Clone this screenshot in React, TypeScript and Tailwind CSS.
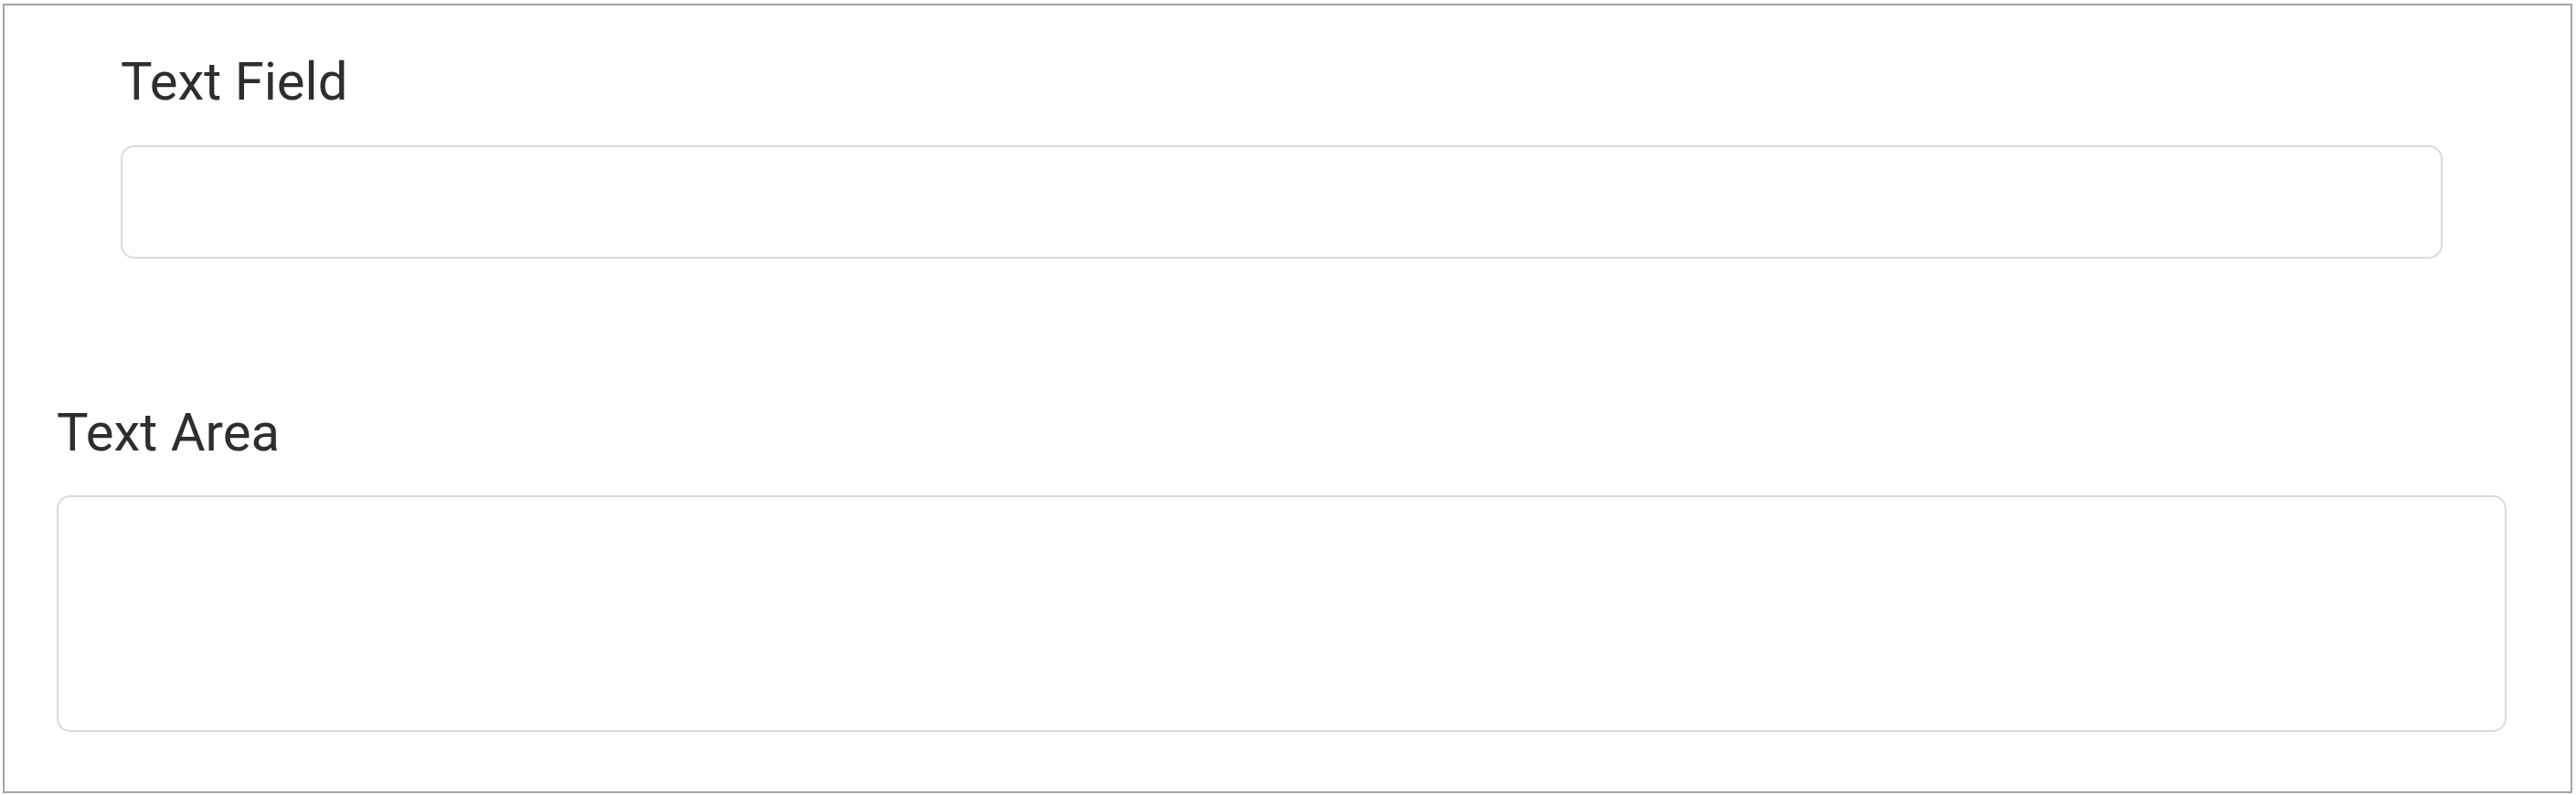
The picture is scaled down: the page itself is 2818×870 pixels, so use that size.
export default function App() {
    return (
        <div className="w-[2818px] h-[870px] bg-white pt-1 pl-[3px] pr-1 pb-[2px] font-['Roboto',sans-serif]">
            <div className="h-full border-2 border-[#a3a3a3] bg-white pl-[57px] pr-[70px]">
                <div className="px-[70px] pt-[41px]">
                    <label className="block text-[58px] leading-[84px] text-[#2e2e2e]">Text Field</label>
                    <input
                        type="text"
                        className="mt-[28px] block w-full h-[124px] rounded-[15px] border-2 border-[#d6dbe1] bg-white outline-none"
                    />
                </div>
                <div className="pt-[148px]">
                    <label className="block text-[58px] leading-[84px] text-[#2e2e2e]">Text Area</label>
                    <textarea className="mt-[27px] block w-full h-[259px] rounded-[15px] border-2 border-[#d6dbe1] bg-white outline-none resize-none" />
                </div>
            </div>
        </div>
    );
}
